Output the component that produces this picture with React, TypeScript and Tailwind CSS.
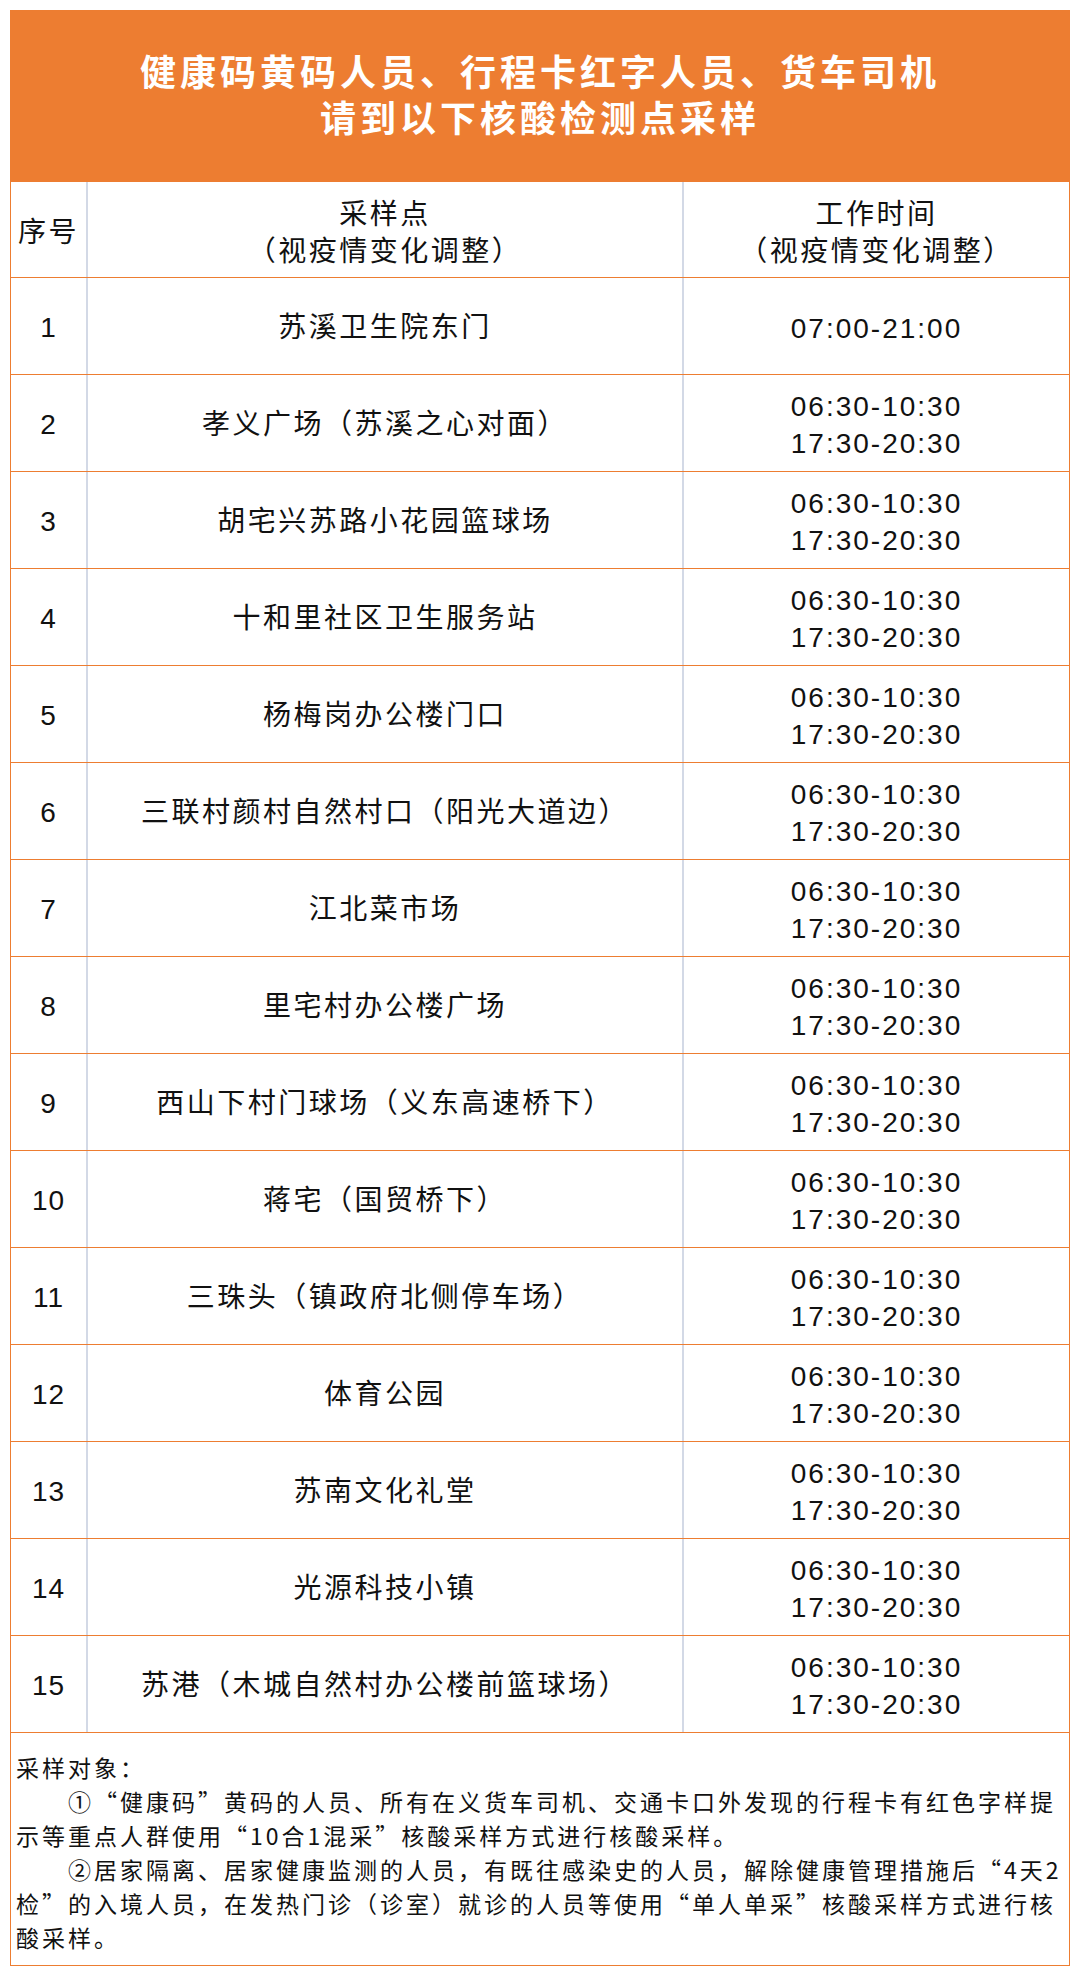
const sites: { name: string; times: string[] }[] = [
  { name: "苏溪卫生院东门", times: ["07:00-21:00"] },
  { name: "孝义广场（苏溪之心对面）", times: ["06:30-10:30", "17:30-20:30"] },
  { name: "胡宅兴苏路小花园篮球场", times: ["06:30-10:30", "17:30-20:30"] },
  { name: "十和里社区卫生服务站", times: ["06:30-10:30", "17:30-20:30"] },
  { name: "杨梅岗办公楼门口", times: ["06:30-10:30", "17:30-20:30"] },
  { name: "三联村颜村自然村口（阳光大道边）", times: ["06:30-10:30", "17:30-20:30"] },
  { name: "江北菜市场", times: ["06:30-10:30", "17:30-20:30"] },
  { name: "里宅村办公楼广场", times: ["06:30-10:30", "17:30-20:30"] },
  { name: "西山下村门球场（义东高速桥下）", times: ["06:30-10:30", "17:30-20:30"] },
  { name: "蒋宅（国贸桥下）", times: ["06:30-10:30", "17:30-20:30"] },
  { name: "三珠头（镇政府北侧停车场）", times: ["06:30-10:30", "17:30-20:30"] },
  { name: "体育公园", times: ["06:30-10:30", "17:30-20:30"] },
  { name: "苏南文化礼堂", times: ["06:30-10:30", "17:30-20:30"] },
  { name: "光源科技小镇", times: ["06:30-10:30", "17:30-20:30"] },
  { name: "苏港（木城自然村办公楼前篮球场）", times: ["06:30-10:30", "17:30-20:30"] },
];

const font = { fontFamily: '"Liberation Sans", "Noto Sans CJK SC", sans-serif' };
const cjk = { fontFamily: '"Noto Sans CJK SC", "Liberation Sans", sans-serif' };

export default function App() {
  return (
    <div className="bg-white w-[1080px] min-h-[1977px] pt-[10px] pl-[10px]" style={font}>
      <div className="w-[1060px] text-[#111]">
        {/* title */}
        <div className="h-[172px] bg-[#ED7D31] flex flex-col items-center justify-center text-white font-bold text-[36px] leading-[46px] tracking-[4px] pb-[6px]" style={cjk}>
          <div>健康码黄码人员、行程卡红字人员、货车司机</div>
          <div>请到以下核酸检测点采样</div>
        </div>

        <div className="border-x border-[#ED7D31]">
          {/* header row */}
          <div className="grid grid-cols-[77px_596px_1fr] h-[96px] border-b border-[#ED7D31] text-[28px] tracking-[2.5px]">
            <div className="flex items-center justify-center border-r-2 border-[#d3d9e6] pt-[6px]">序号</div>
            <div className="flex flex-col items-center justify-center border-r-2 border-[#d3d9e6] leading-[37px] pt-[6px]">
              <div>采样点</div>
              <div>（视疫情变化调整）</div>
            </div>
            <div className="flex flex-col items-center justify-center leading-[37px] pt-[6px]">
              <div>工作时间</div>
              <div>（视疫情变化调整）</div>
            </div>
          </div>

          {/* rows */}
          {sites.map((s, i) => (
            <div key={i} className="grid grid-cols-[77px_596px_1fr] h-[97px] border-b border-[#ED7D31] text-[28px]">
              <div className="flex items-center justify-center border-r-2 border-[#d3d9e6] tracking-[1px] pt-[4px]">{i + 1}</div>
              <div className="flex items-center justify-center border-r-2 border-[#d3d9e6] tracking-[2.5px] pt-[4px]">{s.name}</div>
              <div className="flex flex-col items-center justify-center leading-[37px] tracking-[2px] pt-[4px]">
                {s.times.map((t) => (
                  <div key={t}>{t}</div>
                ))}
              </div>
            </div>
          ))}

          {/* notes */}
          <div className="h-[233px] border-b border-[#ED7D31] pl-[5px] pt-[17px] text-[23px] leading-[34px] tracking-[3px] whitespace-nowrap" style={cjk}>
            <div>采样对象：</div>
            <div className="pl-[52px]">①“健康码”黄码的人员、所有在义货车司机、交通卡口外发现的行程卡有红色字样提</div>
            <div>示等重点人群使用“10合1混采”核酸采样方式进行核酸采样。</div>
            <div className="pl-[52px]">②居家隔离、居家健康监测的人员，有既往感染史的人员，解除健康管理措施后“4天2</div>
            <div>检”的入境人员，在发热门诊（诊室）就诊的人员等使用“单人单采”核酸采样方式进行核</div>
            <div>酸采样。</div>
          </div>
        </div>
      </div>
    </div>
  );
}
